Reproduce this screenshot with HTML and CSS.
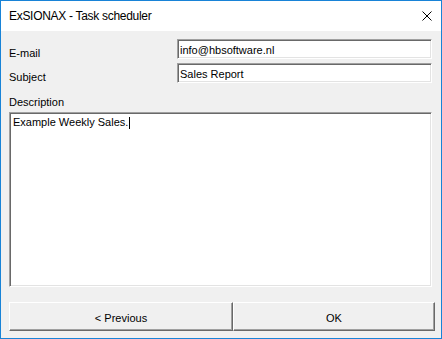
FILE: index.html
```html
<!DOCTYPE html>
<html lang="en">
<head>
    <meta charset="UTF-8">
    <title>ExSIONAX - Task scheduler</title>
    <link rel="stylesheet" href="styles.css">
</head>
<body>
    <div class="window">
        <div class="titlebar">
            <div class="title">ExSIONAX - Task scheduler</div>
            <div class="close">
                <svg width="10" height="10" viewBox="0 0 10 10">
                    <path d="M0.5 0.5 L9.5 9.5 M9.5 0.5 L0.5 9.5" stroke="#000" stroke-width="1" fill="none"/>
                </svg>
            </div>
        </div>

        <div class="content">
            <div class="field-row first">
                <div class="field-label">E-mail</div>
                <div class="field-input">info@hbsoftware.nl</div>
            </div>
            <div class="field-row">
                <div class="field-label">Subject</div>
                <div class="field-input">Sales Report</div>
            </div>

            <div class="desc-label">Description</div>
            <div class="memo">Example Weekly Sales.<span class="caret"></span></div>

            <div class="buttons">
                <button class="btn btn-prev">&lt; Previous</button>
                <button class="btn btn-ok">OK</button>
            </div>
        </div>
    </div>
</body>
</html>
```

FILE: styles.css
```css
body {
    margin: 0;
    padding: 0;
    font-family: 'Liberation Sans', Arial, sans-serif;
    font-size: 11px;
    color: #000;
    background-color: #f0f0f0;
}

.window {
    width: 442px;
    height: 339px;
    box-sizing: border-box;
    border: 1px solid #1883d7;
    background-color: #f0f0f0;
}

.titlebar {
    height: 30px;
    background-color: #fff;
    display: flex;
    align-items: center;
    justify-content: space-between;
    padding: 0 9px 0 8px;
}

.title {
    font-size: 12px;
    letter-spacing: -0.3px;
    line-height: 30px;
}

.close {
    width: 10px;
    height: 10px;
    display: flex;
}

.content {
    padding: 0 0 0 8px;
}

.field-row {
    display: flex;
    height: 20px;
    margin-top: 4px;
}

.field-row.first {
    margin-top: 8px;
}

.field-label {
    width: 168px;
    padding-top: 4px;
    line-height: 20px;
    box-sizing: border-box;
    height: 20px;
}

.field-input {
    width: 255px;
    height: 20px;
    box-sizing: border-box;
    background-color: #fff;
    border: 1px solid;
    border-color: #a0a0a0 #fff #fff #a0a0a0;
    box-shadow: inset 1px 1px 0 #696969, inset -1px -1px 0 #e3e3e3;
    padding: 2px 2px 0 2px;
    line-height: 16px;
    white-space: nowrap;
    overflow: hidden;
}

.desc-label {
    margin-top: 13px;
    line-height: 13px;
}

.memo {
    margin-top: 3px;
    width: 423px;
    height: 175px;
    box-sizing: border-box;
    background-color: #fff;
    border: 1px solid;
    border-color: #a0a0a0 #fff #fff #a0a0a0;
    box-shadow: inset 1px 1px 0 #696969, inset -1px -1px 0 #e3e3e3;
    padding: 3px 3px 0 3px;
    line-height: 13px;
}

.caret {
    display: inline-block;
    width: 1px;
    height: 12px;
    background-color: #000;
    margin-left: 1px;
    vertical-align: -3px;
}

.buttons {
    display: flex;
    margin-top: 15px;
}

.btn {
    height: 29px;
    box-sizing: border-box;
    background-color: #f0f0f0;
    border: 1px solid;
    border-color: #fff #696969 #696969 #fff;
    box-shadow: inset -1px -1px 0 #a0a0a0;
    padding: 3px 0 0 0;
    line-height: 24px;
    font-family: 'Liberation Sans', Arial, sans-serif;
    font-size: 11px;
    color: #000;
    text-align: center;
    cursor: pointer;
}

.btn-prev {
    width: 224px;
}

.btn-ok {
    width: 202px;
}
```
